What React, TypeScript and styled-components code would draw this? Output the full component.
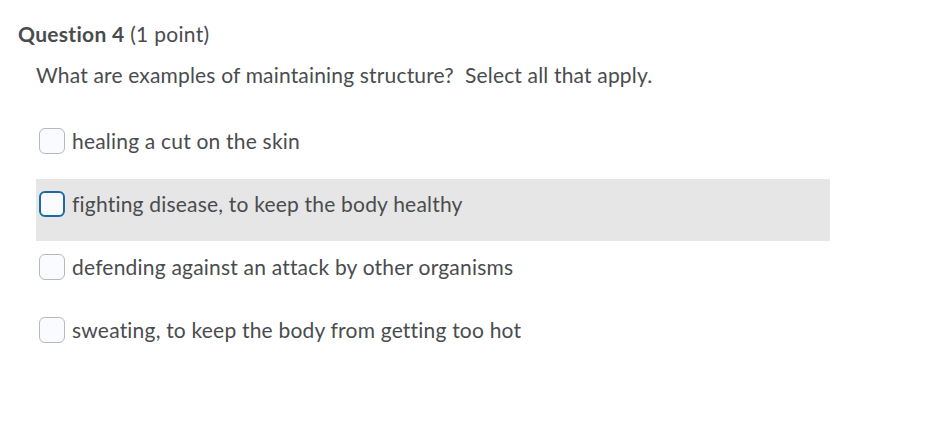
import React from "react";
import styled, { createGlobalStyle } from "styled-components";

const Global = createGlobalStyle`
  html, body { margin: 0; padding: 0; background: #ffffff; }
  body {
    font-family: Lato, "Open Sans", sans-serif;
    color: #494c4e;
    font-variant-ligatures: none;
  }
`;

const Page = styled.div`
  width: 942px;
  height: 423px;
  padding: 22px 0 0 18px;
  box-sizing: border-box;
`;

const Title = styled.h2`
  margin: 0;
  font-size: 21px;
  line-height: 24px;
  font-weight: 400;
  letter-spacing: 0.3px;
  color: #494c4e;
`;

const Strong = styled.span`
  font-weight: 700;
`;

const Prompt = styled.p`
  margin: 16px 0 0 18px;
  font-size: 21px;
  line-height: 26px;
  letter-spacing: 0.17px;
`;

const Options = styled.div`
  margin: 28px 0 0 18px;
  width: 794px;
  display: flex;
  flex-direction: column;
  gap: 1px;
`;

const Row = styled.label<{ $active?: boolean }>`
  display: flex;
  align-items: flex-start;
  gap: 7px;
  height: 62px;
  box-sizing: border-box;
  padding: 12px 0 0 3px;
  background: ${(p) => (p.$active ? "#e6e6e6" : "transparent")};
  font-size: 21px;
  line-height: 26px;
  letter-spacing: 0.2px;
`;

const Box = styled.span<{ $active?: boolean }>`
  width: 26px;
  height: 26px;
  box-sizing: border-box;
  border-radius: 6px;
  background: #f9fbff;
  border: ${(p) => (p.$active ? "2px solid #1a6ba5" : "1px solid #b6b8ba")};
  flex: none;
`;

const options = [
  "healing a cut on the skin",
  "fighting disease, to keep the body healthy",
  "defending against an attack by other organisms",
  "sweating, to keep the body from getting too hot",
];

export default function App() {
  return (
    <Page>
      <Global />
      <Title>
        <Strong>Question 4</Strong> (1 point)
      </Title>
      <Prompt>What are examples of maintaining structure?&nbsp; Select all that apply.</Prompt>
      <Options>
        {options.map((o, i) => (
          <Row key={o} $active={i === 1}>
            <Box $active={i === 1} />
            {o}
          </Row>
        ))}
      </Options>
    </Page>
  );
}
